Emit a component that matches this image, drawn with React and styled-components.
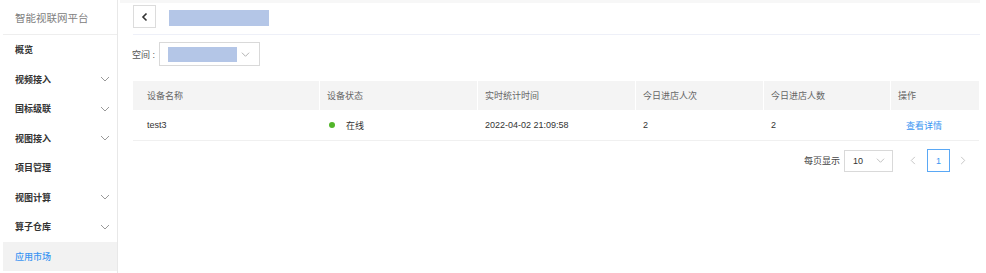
import React from "react";
import styled, { createGlobalStyle } from "styled-components";

const Global = createGlobalStyle`
  html, body { margin: 0; padding: 0; background: #fff; }
  body { font-family: "Liberation Sans", "Noto Sans CJK SC", sans-serif; font-size: 9px; color: #333; }
  * { box-sizing: border-box; }
`;

const Page = styled.div`
  display: flex;
  width: 986px;
  height: 273px;
  overflow: hidden;
`;

const Sidebar = styled.nav`
  width: 115px;
  margin-left: 3px;
  border-right: 1px solid #e8e8e8;
  display: flex;
  flex-direction: column;
  flex-shrink: 0;
`;

const Brand = styled.div`
  height: 35px;
  border-bottom: 1px solid #eeeeee;
  display: flex;
  align-items: center;
  padding-left: 12px;
  color: #808080;
  font-size: 10.5px;
`;

const MenuItem = styled.div`
  height: 29.5px;
  display: flex;
  align-items: center;
  justify-content: space-between;
  padding: 0 7px 0 12px;
  font-size: 9px;
  font-weight: ${(p) => (p.$active ? 500 : 600)};
  color: ${(p) => (p.$active ? "#3a95f2" : "#333")};
  background: ${(p) => (p.$active ? "#f2f2f2" : "transparent")};
`;

const Main = styled.main`
  flex: 1;
  display: flex;
  flex-direction: column;
  padding: 0 6px 0 2px;
`;

const TopStrip = styled.div`
  height: 3px;
  background: #f7f7f7;
`;

const Header = styled.div`
  height: 32px;
  margin-left: 13px;
  display: flex;
  align-items: flex-start;
  gap: 13px;
  border-bottom: 1px solid #eef0f8;
  padding-top: 2px;
`;

const BackBtn = styled.div`
  width: 23px;
  height: 23px;
  border: 1px solid #dcdcdc;
  display: flex;
  align-items: center;
  justify-content: center;
`;

const Placeholder = styled.div`
  width: ${(p) => p.$w}px;
  height: ${(p) => p.$h}px;
  margin-top: ${(p) => p.$mt || 0}px;
  background: #b4c6e7;
`;

const Filter = styled.div`
  display: flex;
  align-items: center;
  margin: 7px 0 0 12px;
  color: #555;
  font-size: 9px;
`;

const FilterLabel = styled.span`
  width: 27px;
  white-space: nowrap;
`;

const SelectBox = styled.div`
  display: flex;
  align-items: center;
  justify-content: space-between;
  width: ${(p) => p.$w}px;
  height: ${(p) => p.$h}px;
  border: 1px solid #d9d9d9;
  padding: 0 ${(p) => p.$pr}px 0 ${(p) => p.$pl}px;
  margin-left: ${(p) => p.$ml || 0}px;
  color: #333;
`;

const Table = styled.div`
  margin: 15px 0 0 13px;
  width: 846px;
`;

const Row = styled.div`
  display: grid;
  grid-template-columns: 186px 158px 158px 128px 127px 89px;
  height: ${(p) => (p.$head ? 29 : 31)}px;
  background: ${(p) => (p.$head ? "#f4f4f4" : "#fff")};
  border-bottom: ${(p) => (p.$head ? "none" : "1px solid #f0f0f0")};
`;

const Cell = styled.div`
  display: flex;
  align-items: center;
  padding-left: ${(p) => (p.$first ? 14 : 7)}px;
  border-left: ${(p) => (p.$sep ? "1.5px solid #fff" : "none")};
  color: ${(p) => (p.$head ? "#666" : "#333")};
  font-size: 9px;
  white-space: nowrap;
`;

const Dot = styled.span`
  width: 6px;
  height: 6px;
  border-radius: 50%;
  background: #52b52a;
  margin: 0 11px 0 2px;
`;

const Link = styled.span`
  color: #3a95f2;
  margin-left: 8px;
`;

const Pager = styled.div`
  display: flex;
  justify-content: flex-end;
  align-items: center;
  margin-top: 8px;
  padding-right: 8px;
  font-size: 9px;
  color: #444;
`;

const PageArrow = styled.div`
  width: 20px;
  display: flex;
  justify-content: center;
  margin: ${(p) => p.$m};
`;

const PageNum = styled.div`
  width: 23px;
  height: 23px;
  border: 1px solid #5aa8f5;
  display: flex;
  align-items: center;
  justify-content: center;
  color: #3a95f2;
`;

const Chevron = ({ color = "#999", size = 10, dir = "down" }) => {
  const d = {
    down: "M1 3 L5 7 L9 3",
    left: "M6.5 1 L2.5 5 L6.5 9",
    right: "M3.5 1 L7.5 5 L3.5 9",
  }[dir];
  return (
    <svg width={size} height={size} viewBox="0 0 10 10">
      <path d={d} fill="none" stroke={color} strokeWidth="1" />
    </svg>
  );
};

const menu = [
  ["概览", false],
  ["视频接入", true],
  ["国标级联", true],
  ["视图接入", true],
  ["项目管理", false],
  ["视图计算", true],
  ["算子仓库", true],
  ["应用市场", false, true],
];

const heads = ["设备名称", "设备状态", "实时统计时间", "今日进店人次", "今日进店人数", "操作"];

export default function App() {
  return (
    <>
      <Global />
      <Page>
        <Sidebar>
          <Brand>智能视联网平台</Brand>
          {menu.map(([t, arrow, active]) => (
            <MenuItem key={t} $active={active}>
              <span>{t}</span>
              {arrow && <Chevron color="#999" size={10} />}
            </MenuItem>
          ))}
        </Sidebar>
        <Main>
          <TopStrip />
          <Header>
            <BackBtn>
              <svg width="10" height="10" viewBox="0 0 10 10">
                <path d="M6.5 1.5 L3 5 L6.5 8.5" fill="none" stroke="#333" strokeWidth="1.6" />
              </svg>
            </BackBtn>
            <Placeholder $w={100} $h={16} $mt={5} />
          </Header>
          <Filter>
            <FilterLabel>空间 :</FilterLabel>
            <SelectBox $w={101} $h={24} $pl={8} $pr={9}>
              <Placeholder $w={69} $h={15} />
              <Chevron color="#aaa" size={9} />
            </SelectBox>
          </Filter>
          <Table>
            <Row $head>
              {heads.map((h, i) => (
                <Cell key={h} $head $first={i === 0} $sep={i > 0}>
                  {h}
                </Cell>
              ))}
            </Row>
            <Row>
              <Cell $first>test3</Cell>
              <Cell $sep>
                <Dot />
                在线
              </Cell>
              <Cell $sep>2022-04-02 21:09:58</Cell>
              <Cell $sep>2</Cell>
              <Cell $sep>2</Cell>
              <Cell $sep>
                <Link>查看详情</Link>
              </Cell>
            </Row>
          </Table>
          <Pager>
            <span>每页显示</span>
            <SelectBox $w={49} $h={22} $pl={8} $pr={7} $ml={4}>
              <span>10</span>
              <Chevron color="#bbb" size={9} />
            </SelectBox>
            <PageArrow $m="0 4px 0 10px">
              <Chevron color="#c0c0c0" size={9} dir="left" />
            </PageArrow>
            <PageNum>1</PageNum>
            <PageArrow $m="0 0 0 2px">
              <Chevron color="#c0c0c0" size={9} dir="right" />
            </PageArrow>
          </Pager>
        </Main>
      </Page>
    </>
  );
}
